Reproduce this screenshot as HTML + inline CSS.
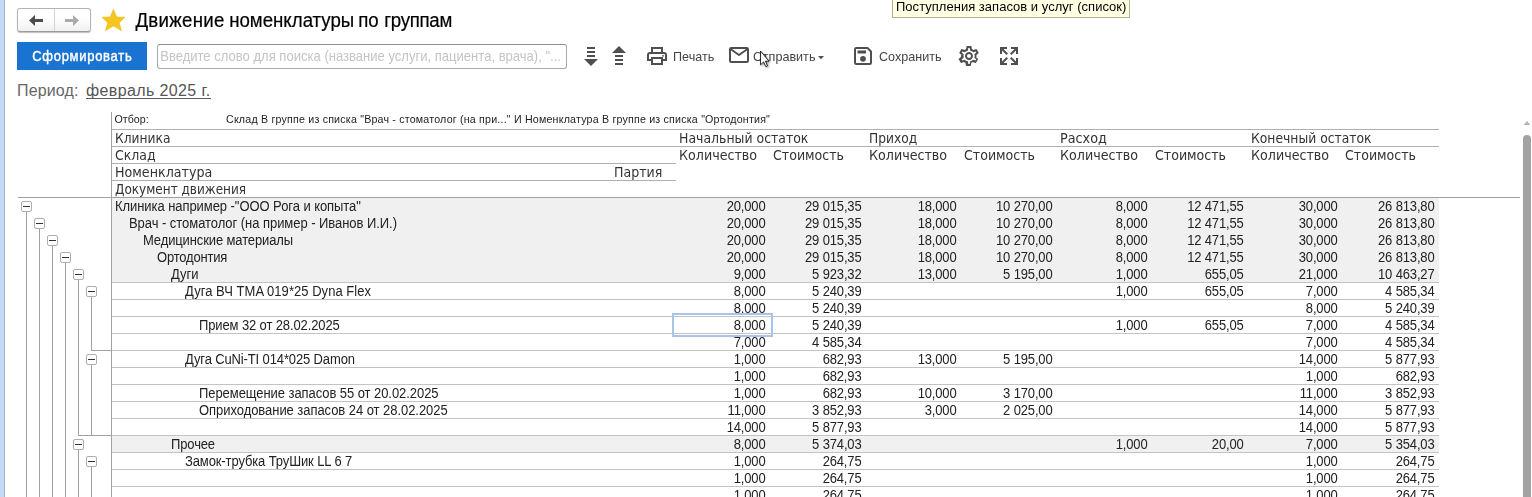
<!DOCTYPE html>
<html>
<head>
<meta charset="utf-8">
<title>Движение номенклатуры по группам</title>
<style>
html,body{margin:0;padding:0;}
body{width:1532px;height:497px;overflow:hidden;position:relative;background:#fff;font-family:"Liberation Sans",sans-serif;color:#222;}
.abs{position:absolute;white-space:nowrap;}
#strip{position:absolute;left:0;top:0;width:4px;height:497px;background:#c4d9f6;border-right:1px solid #a2b6d3;}
/* nav */
#nav{position:absolute;left:17px;top:8px;width:72px;height:22px;border:1px solid #b4b4b4;border-bottom-color:#9a9a9a;border-radius:3px;background:linear-gradient(#fff 40%,#f1f1f1);box-shadow:0 1px 1px rgba(0,0,0,.25);}
#nav i{position:absolute;left:36px;top:0;width:1px;height:22px;background:#d2d2d2;}
#title{position:absolute;left:0;top:10px;-webkit-text-stroke:.2px #000;font-size:18.67px;line-height:22px;color:#000;}
#title span{position:absolute;top:0;white-space:nowrap;transform:scaleY(1.05);transform-origin:0 17.5px;}
#btn{left:17px;top:42px;width:130px;height:28px;background:#1a73d0;color:#fff;font-weight:normal;font-size:13px;line-height:28px;text-align:center;letter-spacing:.72px;-webkit-text-stroke:.38px #fff;text-indent:.3px;}
#search{left:157px;top:44px;width:408px;height:23px;border:1px solid #a8a8a8;border-top-color:#8c8c8c;border-radius:3px;background:#fff;}
#btn span{display:inline-block;transform:scaleY(1.07);transform-origin:0 18px;position:relative;top:.8px;}
#search span{transform:scaleY(1.07);transform-origin:0 16px;position:absolute;left:2.2px;top:0;line-height:24px;font-size:13.05px;color:#c4c4c4;}
.tb{font-size:12.6px;line-height:16px;color:#444;top:49px;transform:scaleY(1.08);transform-origin:0 12.4px;}
#tip{left:892px;top:-1px;width:236px;height:17px;border:1px solid #b8ad8e;background:#ffffe3;font-size:13px;line-height:15px;color:#000;}
#tip span{position:absolute;left:3px;top:-1.4px;transform:scaleY(1.05);transform-origin:0 12px;letter-spacing:.02px;}
#plabel{left:17px;top:81px;font-size:16px;line-height:20px;color:#666;letter-spacing:.15px;}
#plink{left:86px;top:81px;font-size:16px;line-height:20px;color:#555;letter-spacing:.38px;}
#plink u{text-decoration:none;}
/* table */
.ln{position:absolute;background:#a0a0a0;display:block;}
.hl{position:absolute;height:1px;background:#b0b0b0;}
.h{position:absolute;white-space:nowrap;font-family:"DejaVu Sans","Liberation Sans",sans-serif;font-size:13.3px;line-height:16px;color:#333;margin-top:1px;transform-origin:0 0;}
.f{position:absolute;white-space:nowrap;font-size:10.67px;line-height:16px;color:#222;transform:scaleY(1.07);transform-origin:0 11.5px;}
.r{position:absolute;left:112px;width:1327px;height:16px;border-bottom:1px solid #c3c3c3;font-size:13px;line-height:16px;color:#222;background:#fff;}
.r.g{background:#f0f0f0;border-bottom-color:#f0f0f0;}
.r.g.e{border-bottom-color:#c3c3c3;}
.r span.v{letter-spacing:-.15px;}
.r span{position:absolute;top:1px;white-space:nowrap;transform:scaleY(1.08);transform-origin:0 12px;}
.bx{position:absolute;display:block;width:9px;height:9px;border:1px solid #aeaeae;border-radius:2px;background:#fff;}
.bx b{position:absolute;left:1px;top:4px;width:7px;height:1px;background:#333;}
#sel{position:absolute;left:672px;top:313px;width:97px;height:20px;border:2px solid #a6c4ec;}
</style>
</head>
<body>
<div id="strip"></div>

<div id="nav"><i></i>
<svg class="abs" style="left:0;top:0" width="72" height="22" viewBox="0 0 72 22"><path d="M11 11.5 L17 6 V10 H25 V13 H17 V17 Z" fill="#4d4d4d"/><path d="M61 11.5 L55 6 V10 H47 V13 H55 V17 Z" fill="#ababab"/></svg>
</div>
<svg class="abs" style="left:101px;top:8px" width="26" height="24" viewBox="0 0 26 24"><path d="M12.450 1.150 L15.700 8.900 L24 9.200 L18.200 14.700 L20.500 22.700 L12.450 17.900 L4.400 22.700 L6.700 14.700 L0.900 9.200 L9.200 8.900 Z" fill="#f4c61e" stroke="#e6b412" stroke-width=".5" stroke-linejoin="miter"/></svg>
<div id="title"><span style="left:135.4px;letter-spacing:.3px">Движение</span> <span style="left:229.2px">номенклатуры</span> <span style="left:358.2px">по</span> <span style="left:384.3px;letter-spacing:-.3px">группам</span></div>

<div id="btn" class="abs"><span>Сформировать</span></div>
<div id="search" class="abs"><span>Введите слово для поиска (название услуги, пациента, врача), "...</span></div>

<!-- toolbar icons -->
<svg class="abs" style="left:583px;top:46px" width="16" height="21" viewBox="0 0 16 21" fill="#4f4f4f"><rect x="4" y="1" width="8" height="2"/><rect x="4" y="5" width="8" height="2"/><rect x="4" y="9" width="8" height="2"/><path d="M1 13 H15 L8 20 Z"/></svg>
<svg class="abs" style="left:611px;top:45px" width="16" height="21" viewBox="0 0 16 21" fill="#4f4f4f"><path d="M1 8 H15 L8 1 Z"/><rect x="4" y="10" width="8" height="2"/><rect x="4" y="14" width="8" height="2"/><rect x="4" y="18" width="8" height="2"/></svg>
<svg class="abs" style="left:646px;top:46px" width="22" height="20" viewBox="0 0 22 20" fill="none" stroke="#4f4f4f" stroke-width="2"><path d="M6 7 V2 H16 V7"/><path d="M6 14 H2 V9 Q2 7 4 7 H18 Q20 7 20 9 V14 H16"/><rect x="6" y="12" width="10" height="6"/><circle cx="17" cy="9.8" r=".9" fill="#4f4f4f" stroke="none"/></svg>
<div class="abs tb" style="left:673px">Печать</div>
<svg class="abs" style="left:728px;top:46px" width="22" height="18" viewBox="0 0 22 18" fill="none" stroke="#4f4f4f" stroke-width="2" stroke-linejoin="round"><rect x="2" y="2" width="18" height="14" rx="1.2"/><path d="M2.5 3 L11 9 L19.5 3"/></svg>
<div class="abs tb" style="left:753px">Отправить</div>
<svg class="abs" style="left:817px;top:55px" width="8" height="5" viewBox="0 0 8 5"><path d="M1 1 H7 L4 4.2 Z" fill="#4f4f4f"/></svg>
<!-- cursor -->
<svg class="abs" style="left:759px;top:50px;filter:drop-shadow(1px 1.500px .8px rgba(0,0,0,.45))" width="16" height="22" viewBox="0 0 16 22"><path d="M1.500 1 V14.800 L4.600 11.900 L6.800 16.600 L8.500 15.800 L6.400 11.200 H10 Z" fill="#fff" stroke="#000" stroke-width=".8" stroke-linejoin="miter"/></svg>
<svg class="abs" style="left:853px;top:46px" width="20" height="20" viewBox="0 0 20 20"><path d="M2 3.2 Q2 2 3.2 2 H14.5 L18 5.5 V16.8 Q18 18 16.800 18 H3.2 Q2 18 2 16.800 Z" fill="none" stroke="#4f4f4f" stroke-width="2" stroke-linejoin="round"/><rect x="4.500" y="4.500" width="8.500" height="3" fill="#4f4f4f"/><circle cx="10" cy="12.800" r="2.900" fill="#4f4f4f"/></svg>
<div class="abs tb" style="left:879px">Сохранить</div>
<svg class="abs" style="left:957px;top:44px" width="24" height="24" viewBox="0 0 24 24"><path fill="#4f4f4f" d="M19.430 12.980c.04-.32.070-.64.070-.98 0-.34-.03-.66-.07-.98l2.110-1.650c.19-.15.240-.42.120-.64l-2-3.460c-.09-.16-.26-.25-.44-.25-.06 0-.12.010-.17.030l-2.490 1c-.52-.4-1.080-.73-1.690-.98l-.38-2.650C14.460 2.180 14.250 2 14 2h-4c-.25 0-.46.180-.49.420l-.38 2.650c-.61.250-1.170.59-1.690.98l-2.490-1c-.06-.02-.12-.03-.18-.03-.17 0-.34.090-.43.250l-2 3.460c-.13.220-.07.490.12.640l2.110 1.650c-.4.320-.7.650-.7.980 0 .33.030.66.070.98l-2.110 1.650c-.19.150-.24.420-.12.640l2 3.460c.9.160.26.250.44.250.06 0 .12-.1.170-.03l2.490-1c.52.400 1.080.73 1.690.98l.38 2.650c.3.240.24.420.49.420h4c.25 0 .46-.18.490-.42l.38-2.650c.61-.25 1.170-.59 1.690-.98l2.490 1c.06.020.12.030.18.030.17 0 .34-.09.43-.25l2-3.460c.12-.22.070-.49-.12-.64l-2.110-1.650zm-1.980-1.710c.4.310.5.520.5.730 0 .21-.2.430-.5.730l-.14 1.130.89.700 1.080.84-.7 1.210-1.270-.51-1.040-.42-.9.680c-.43.320-.84.560-1.250.73l-1.060.43-.16 1.130-.2 1.350h-1.400l-.19-1.350-.16-1.130-1.060-.43c-.43-.18-.83-.41-1.230-.71l-.91-.7-1.060.43-1.270.51-.7-1.210 1.080-.84.890-.7-.14-1.130c-.03-.31-.05-.54-.05-.74s.02-.43.050-.73l.14-1.130-.89-.7-1.080-.84.700-1.210 1.270.51 1.040.42.900-.68c.43-.32.840-.56 1.250-.73l1.060-.43.160-1.130.2-1.350h1.390l.19 1.350.16 1.130 1.060.43c.43.180.83.410 1.230.71l.91.700 1.060-.43 1.270-.51.700 1.210-1.070.85-.89.700.14 1.130zM12 8c-2.210 0-4 1.790-4 4s1.790 4 4 4 4-1.790 4-4-1.790-4-4-4zm0 6c-1.100 0-2-.9-2-2s.9-2 2-2 2 .9 2 2-.9 2-2 2z"/></svg>
<svg class="abs" style="left:1000px;top:47px" width="18" height="18" viewBox="0 0 18 18" fill="none" stroke="#4f4f4f" stroke-width="2"><path d="M1 7 V1 H7 M1.500 1.500 L7.300 7.300"/><path d="M11 1 H17 V7 M16.500 1.500 L10.700 7.300"/><path d="M1 11 V17 H7 M1.500 16.500 L7.300 10.700"/><path d="M11 17 H17 V11 M16.500 16.500 L10.700 10.700"/></svg>

<div id="tip" class="abs"><span>Поступления запасов и услуг (список)</span></div>

<div id="plabel" class="abs">Период:</div>
<div id="plink" class="abs"><u>февраль 2025 г.</u></div>
<div class="hl" style="left:86px;top:98px;width:125px;background:#5a5a5a"></div>

<!-- table header -->
<i class="ln" style="left:111px;top:112px;width:1px;height:385px"></i>
<div class="hl" style="left:112px;top:129px;width:1327px"></div>
<div class="hl" style="left:112px;top:146px;width:1327px"></div>
<div class="hl" style="left:112px;top:163px;width:564px"></div>
<div class="hl" style="left:112px;top:180px;width:564px"></div>
<div class="hl" style="left:18px;top:197px;width:1502px;background:#a0a0a0"></div>

<div class="f" style="left:114.5px;top:111px">Отбор:</div>
<div class="f" style="left:226px;top:111px;letter-spacing:.195px">Склад В группе из списка "Врач - стоматолог (на при..." И Номенклатура В группе из списка "Ортодонтия"</div>



<div class="h" style="left:114.60px;top:130px;transform:scaleX(0.922)">Клиника</div>
<div class="h" style="left:114.60px;top:147px;transform:scaleX(0.943)">Склад</div>
<div class="h" style="left:114.80px;top:164px;transform:scaleX(0.954)">Номенклатура</div>
<div class="h" style="left:613.80px;top:164px;transform:scaleX(0.947)">Партия</div>
<div class="h" style="left:114.80px;top:181px;transform:scaleX(0.907)">Документ движения</div>
<div class="h" style="left:678.70px;top:130px;transform:scaleX(0.939)">Начальный остаток</div>
<div class="h" style="left:868.70px;top:130px;transform:scaleX(0.922)">Приход</div>
<div class="h" style="left:1059.60px;top:130px;transform:scaleX(0.962)">Расход</div>
<div class="h" style="left:1250.60px;top:130px;transform:scaleX(0.930)">Конечный остаток</div>
<div class="h" style="left:678.70px;top:147px;transform:scaleX(0.955)">Количество</div>
<div class="h" style="left:868.70px;top:147px;transform:scaleX(0.955)">Количество</div>
<div class="h" style="left:1059.60px;top:147px;transform:scaleX(0.955)">Количество</div>
<div class="h" style="left:1250.60px;top:147px;transform:scaleX(0.955)">Количество</div>
<div class="h" style="left:772.70px;top:147px;transform:scaleX(0.949)">Стоимость</div>
<div class="h" style="left:963.60px;top:147px;transform:scaleX(0.949)">Стоимость</div>
<div class="h" style="left:1155.10px;top:147px;transform:scaleX(0.949)">Стоимость</div>
<div class="h" style="left:1345.10px;top:147px;transform:scaleX(0.949)">Стоимость</div>

<!-- rows -->
<div class="r g" style="top:198px">
<span class="n" style="left:3px;letter-spacing:-0.062px">Клиника например -"ООО Рога и копыта"</span>
<span class="v" style="right:673.5px">20,000</span>
<span class="v" style="right:577.5px">29 015,35</span>
<span class="v" style="right:482.5px">18,000</span>
<span class="v" style="right:386.5px">10 270,00</span>
<span class="v" style="right:291.5px">8,000</span>
<span class="v" style="right:195.4px">12 471,55</span>
<span class="v" style="right:101.4px">30,000</span>
<span class="v" style="right:4.5px">26 813,80</span>
</div>
<div class="r g" style="top:215px">
<span class="n" style="left:17px;letter-spacing:-0.047px">Врач - стоматолог (на пример - Иванов И.И.)</span>
<span class="v" style="right:673.5px">20,000</span>
<span class="v" style="right:577.5px">29 015,35</span>
<span class="v" style="right:482.5px">18,000</span>
<span class="v" style="right:386.5px">10 270,00</span>
<span class="v" style="right:291.5px">8,000</span>
<span class="v" style="right:195.4px">12 471,55</span>
<span class="v" style="right:101.4px">30,000</span>
<span class="v" style="right:4.5px">26 813,80</span>
</div>
<div class="r g" style="top:232px">
<span class="n" style="left:31px;letter-spacing:-0.12px">Медицинские материалы</span>
<span class="v" style="right:673.5px">20,000</span>
<span class="v" style="right:577.5px">29 015,35</span>
<span class="v" style="right:482.5px">18,000</span>
<span class="v" style="right:386.5px">10 270,00</span>
<span class="v" style="right:291.5px">8,000</span>
<span class="v" style="right:195.4px">12 471,55</span>
<span class="v" style="right:101.4px">30,000</span>
<span class="v" style="right:4.5px">26 813,80</span>
</div>
<div class="r g" style="top:249px">
<span class="n" style="left:45px;letter-spacing:-0.2px">Ортодонтия</span>
<span class="v" style="right:673.5px">20,000</span>
<span class="v" style="right:577.5px">29 015,35</span>
<span class="v" style="right:482.5px">18,000</span>
<span class="v" style="right:386.5px">10 270,00</span>
<span class="v" style="right:291.5px">8,000</span>
<span class="v" style="right:195.4px">12 471,55</span>
<span class="v" style="right:101.4px">30,000</span>
<span class="v" style="right:4.5px">26 813,80</span>
</div>
<div class="r g e" style="top:266px">
<span class="n" style="left:59px">Дуги</span>
<span class="v" style="right:673.5px">9,000</span>
<span class="v" style="right:577.5px">5 923,32</span>
<span class="v" style="right:482.5px">13,000</span>
<span class="v" style="right:386.5px">5 195,00</span>
<span class="v" style="right:291.5px">1,000</span>
<span class="v" style="right:195.4px">655,05</span>
<span class="v" style="right:101.4px">21,000</span>
<span class="v" style="right:4.5px">10 463,27</span>
</div>
<div class="r" style="top:283px">
<span class="n" style="left:73px;letter-spacing:0.04px">Дуга ВЧ TMA 019*25 Dyna Flex</span>
<span class="v" style="right:673.5px">8,000</span>
<span class="v" style="right:577.5px">5 240,39</span>
<span class="v" style="right:291.5px">1,000</span>
<span class="v" style="right:195.4px">655,05</span>
<span class="v" style="right:101.4px">7,000</span>
<span class="v" style="right:4.5px">4 585,34</span>
</div>
<div class="r" style="top:300px">
<span class="v" style="right:673.5px">8,000</span>
<span class="v" style="right:577.5px">5 240,39</span>
<span class="v" style="right:101.4px">8,000</span>
<span class="v" style="right:4.5px">5 240,39</span>
</div>
<div class="r" style="top:317px">
<span class="n" style="left:87px;letter-spacing:-0.12px">Прием 32 от 28.02.2025</span>
<span class="v" style="right:673.5px">8,000</span>
<span class="v" style="right:577.5px">5 240,39</span>
<span class="v" style="right:291.5px">1,000</span>
<span class="v" style="right:195.4px">655,05</span>
<span class="v" style="right:101.4px">7,000</span>
<span class="v" style="right:4.5px">4 585,34</span>
</div>
<div class="r" style="top:334px">
<span class="v" style="right:673.5px">7,000</span>
<span class="v" style="right:577.5px">4 585,34</span>
<span class="v" style="right:101.4px">7,000</span>
<span class="v" style="right:4.5px">4 585,34</span>
</div>
<div class="r" style="top:351px">
<span class="n" style="left:73px;letter-spacing:-0.13px">Дуга CuNi-TI 014*025 Damon</span>
<span class="v" style="right:673.5px">1,000</span>
<span class="v" style="right:577.5px">682,93</span>
<span class="v" style="right:482.5px">13,000</span>
<span class="v" style="right:386.5px">5 195,00</span>
<span class="v" style="right:101.4px">14,000</span>
<span class="v" style="right:4.5px">5 877,93</span>
</div>
<div class="r" style="top:368px">
<span class="v" style="right:673.5px">1,000</span>
<span class="v" style="right:577.5px">682,93</span>
<span class="v" style="right:101.4px">1,000</span>
<span class="v" style="right:4.5px">682,93</span>
</div>
<div class="r" style="top:385px">
<span class="n" style="left:87px;letter-spacing:-0.064px">Перемещение запасов 55 от 20.02.2025</span>
<span class="v" style="right:673.5px">1,000</span>
<span class="v" style="right:577.5px">682,93</span>
<span class="v" style="right:482.5px">10,000</span>
<span class="v" style="right:386.5px">3 170,00</span>
<span class="v" style="right:101.4px">11,000</span>
<span class="v" style="right:4.5px">3 852,93</span>
</div>
<div class="r" style="top:402px">
<span class="n" style="left:87px;letter-spacing:-0.05px">Оприходование запасов 24 от 28.02.2025</span>
<span class="v" style="right:673.5px">11,000</span>
<span class="v" style="right:577.5px">3 852,93</span>
<span class="v" style="right:482.5px">3,000</span>
<span class="v" style="right:386.5px">2 025,00</span>
<span class="v" style="right:101.4px">14,000</span>
<span class="v" style="right:4.5px">5 877,93</span>
</div>
<div class="r" style="top:419px">
<span class="v" style="right:673.5px">14,000</span>
<span class="v" style="right:577.5px">5 877,93</span>
<span class="v" style="right:101.4px">14,000</span>
<span class="v" style="right:4.5px">5 877,93</span>
</div>
<div class="r g e" style="top:436px">
<span class="n" style="left:59px;letter-spacing:-0.13px">Прочее</span>
<span class="v" style="right:673.5px">8,000</span>
<span class="v" style="right:577.5px">5 374,03</span>
<span class="v" style="right:291.5px">1,000</span>
<span class="v" style="right:195.4px">20,00</span>
<span class="v" style="right:101.4px">7,000</span>
<span class="v" style="right:4.5px">5 354,03</span>
</div>
<div class="r" style="top:453px">
<span class="n" style="left:73px;letter-spacing:-0.115px">Замок-трубка ТруШик LL 6 7</span>
<span class="v" style="right:673.5px">1,000</span>
<span class="v" style="right:577.5px">264,75</span>
<span class="v" style="right:101.4px">1,000</span>
<span class="v" style="right:4.5px">264,75</span>
</div>
<div class="r" style="top:470px">
<span class="v" style="right:673.5px">1,000</span>
<span class="v" style="right:577.5px">264,75</span>
<span class="v" style="right:101.4px">1,000</span>
<span class="v" style="right:4.5px">264,75</span>
</div>
<div class="r" style="top:487px">
<span class="v" style="right:673.5px">1,000</span>
<span class="v" style="right:577.5px">264,75</span>
<span class="v" style="right:101.4px">1,000</span>
<span class="v" style="right:4.5px">264,75</span>
</div>
<div id="sel"></div>

<!-- tree -->
<i class="bx" style="left:21px;top:201px"><b></b></i>
<i class="ln" style="left:26px;top:212px;width:1px;height:286px"></i>
<i class="bx" style="left:34px;top:218px"><b></b></i>
<i class="ln" style="left:39px;top:229px;width:1px;height:269px"></i>
<i class="bx" style="left:47px;top:235px"><b></b></i>
<i class="ln" style="left:52px;top:246px;width:1px;height:252px"></i>
<i class="bx" style="left:60px;top:252px"><b></b></i>
<i class="ln" style="left:65px;top:263px;width:1px;height:235px"></i>
<i class="bx" style="left:73px;top:269px"><b></b></i>
<i class="ln" style="left:78px;top:280px;width:1px;height:156px"></i>
<i class="ln" style="left:78px;top:435px;width:34px;height:1px"></i>
<i class="bx" style="left:73px;top:439px"><b></b></i>
<i class="ln" style="left:78px;top:450px;width:1px;height:48px"></i>
<i class="bx" style="left:86px;top:286px"><b></b></i>
<i class="ln" style="left:91px;top:297px;width:1px;height:54px"></i>
<i class="ln" style="left:91px;top:350px;width:21px;height:1px"></i>
<i class="bx" style="left:86px;top:354px"><b></b></i>
<i class="ln" style="left:91px;top:365px;width:1px;height:71px"></i>
<i class="bx" style="left:86px;top:456px"><b></b></i>
<i class="ln" style="left:91px;top:467px;width:1px;height:31px"></i>

<!-- scrollbar -->
<svg class="abs" style="left:1522px;top:119px" width="10" height="8" viewBox="0 0 10 8"><path d="M1.500 6 L5 2 L8.500 6 Z" fill="#b5b5b5"/></svg>
<div class="abs" style="left:1523px;top:135px;width:8px;height:380px;border-radius:4px;background:#a3a3a3"></div>
</body>
</html>
